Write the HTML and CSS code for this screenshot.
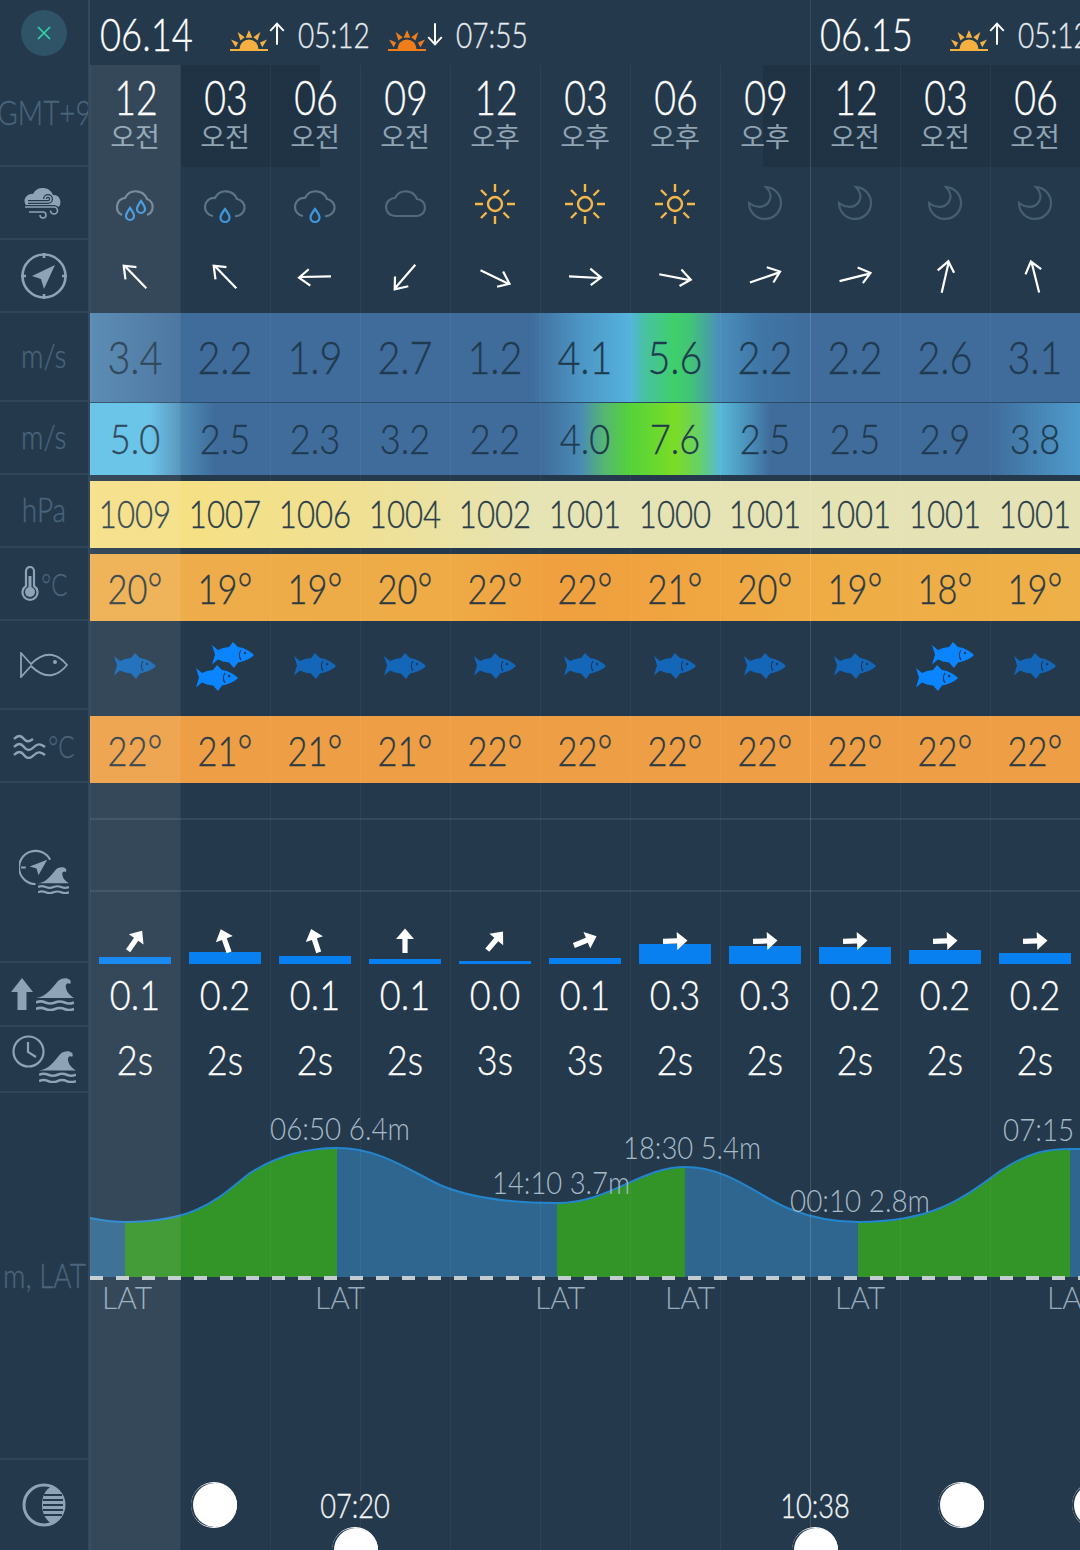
FILE: index.html
```html
<!DOCTYPE html>
<html lang="ko">
<head>
    <meta charset="UTF-8">
    <meta name="viewport" content="width=device-width, initial-scale=1.0">
    <title>Windy forecast</title>
    <link rel="stylesheet" href="styles.css">
</head>
<body>
    <!-- shared icons -->
    <svg class="defs" width="0" height="0">
        <symbol id="sun-half" viewBox="0 0 40 22">
            <path d="M10 20a10 10 0 0 1 20 0z"/>
            <path d="M0 20h40v2H0zM20 0l3.500 8h-7zM8 2l7.500 5.500-4.500 3.500zM32 2l-7.500 5.500 4.500 3.500zM1 10l7.500 3-2.500 5zM39 10l-7.500 3 2.500 5z"/>
        </symbol>
        <symbol id="thin-arrow" viewBox="-10 -13 20 26">
            <path d="M0 12V-11M-7.500 -3.500L0 -11.500L7.500 -3.500" fill="none" stroke="currentColor" stroke-width="2.200"/>
        </symbol>
        <symbol id="cloud" viewBox="0 0 44 44">
            <path d="M12 34H33a8.500 8.500 0 0 0 1-17A12 12 0 0 0 12 16a9 9 0 0 0 0 18z" fill="none" stroke="#52697d" stroke-width="2.200"/>
        </symbol>
        <symbol id="cloud-rain" viewBox="0 0 44 44">
            <path d="M32 34a8.500 8.500 0 0 0 2-17A12 12 0 0 0 12 16a9 9 0 0 0-2 18" fill="none" stroke="#5c7488" stroke-width="2.200"/>
            <path d="M22 27c-3 4-4.500 6-4.500 8.500a4.500 4.500 0 0 0 9 0c0-2.500-1.500-4.500-4.500-8.500z" fill="none" stroke="#3f97dd" stroke-width="2.200"/>
        </symbol>
        <symbol id="cloud-rain2" viewBox="0 0 44 44">
            <path d="M34 33a8.500 8.500 0 0 0 0-16A12 12 0 0 0 12 16a9 9 0 0 0-3 17" fill="none" stroke="#6d8396" stroke-width="2.200"/>
            <path d="M17 26c-2.500 3.500-4 5.500-4 8a4 4 0 0 0 8 0c0-2.500-1.500-4.500-4-8z" fill="none" stroke="#3f97dd" stroke-width="2.200"/>
            <path d="M28 19c-2.500 3.500-4 5.500-4 8a4 4 0 0 0 8 0c0-2.500-1.500-4.500-4-8z" fill="none" stroke="#3f97dd" stroke-width="2.200"/>
        </symbol>
        <symbol id="sun" viewBox="0 0 44 44">
            <circle cx="22" cy="22" r="7" fill="none" stroke="#f3b849" stroke-width="2.400"/>
            <path d="M22 2v8M22 34v8M2 22h8M34 22h8M8 8l5.500 5.500M30.500 30.500L36 36M36 8l-5.500 5.500M13.500 30.500L8 36" stroke="#f3b849" stroke-width="2.400"/>
        </symbol>
        <symbol id="moon" viewBox="0 0 44 44">
            <path d="M23 5A16 16 0 1 1 6 21C11 25 20 27 25 21C29 16 28 10 23 5z" fill="none" stroke="#475f73" stroke-width="2.200"/>
        </symbol>
        <symbol id="wind-arrow" viewBox="-20 -20 40 40">
            <path d="M0 16L.5 -15M-8.500 -5L0 -16L8 -6" fill="none" stroke="#fff" stroke-width="2.200"/>
        </symbol>
        <symbol id="wave-arrow" viewBox="-14 -14 28 28">
            <path d="M-2.600 12V-2H-9L0 -12.500L9 -2H2.600V12z" fill="#fff"/>
        </symbol>
        <symbol id="fish" viewBox="0 0 44 28">
            <path fill="currentColor" d="M1 4l6 5 5-2 6-1 4-5 5 5c7 1 12 4 16 8-4 4-9 6-16 7.500l-4 5.500-5-5.500-6-1-5-2-6 5 3-10z"/>
            <path fill="none" stroke="#1b3c5c" stroke-width="1.200" d="M30 9c-2 3-2 7 0 10"/>
            <circle cx="34" cy="12" r="1.200" fill="#1b3c5c"/>
        </symbol>
        <symbol id="waves" viewBox="0 0 38 33">
            <path d="M0 20C10 19 16 10 22 3C25 0 31-1 34 2C35 3 35 5 34 6C31 4 29 7 30 10C31 15 34 17 38 20z" fill="currentColor"/>
            <path d="M0 24.500c3-1.500 6-1.500 9.500 0s6 1.500 9.500 0 6-1.500 9.500 0 6 1.500 9.500 0M0 31c3-1.500 6-1.500 9.500 0s6 1.500 9.500 0 6-1.500 9.500 0 6 1.500 9.500 0" fill="none" stroke="currentColor" stroke-width="2.600"/>
        </symbol>
    </svg>

    <div class="page">
        <div class="labels">
            <div class="lb lb-top"><div class="close-btn">
                <svg width="14" height="14" viewBox="0 0 14 14"><path d="M1 1l12 12M13 1L1 13" stroke="#2fd8a8" stroke-width="1.600"/></svg>
            </div></div>
            <div class="lb lb-hours"><span class="lb-txt">GMT+9</span></div>
            <div class="lb lb-73">
                <svg class="lb-ico" width="40" height="32" viewBox="0 0 40 32">
                    <path d="M8 21a7 7 0 0 1-1-14 3 3 0 0 1 2 0A11 11 0 0 1 29 8a7 7 0 0 1 4 13z" fill="#8ea3b5"/>
                    <path d="M4 15h20a3 3 0 1 0-3-3M1 20h29a3.500 3.500 0 1 1-3.500 3.500M5 25h14a3 3 0 1 1-3 3" fill="none" stroke="#24394c" stroke-width="4"/>
                    <path d="M4 15h20a3 3 0 1 0-3-3M1 20h29a3.500 3.500 0 1 1-3.500 3.500M5 25h14a3 3 0 1 1-3 3" fill="none" stroke="#8ea3b5" stroke-width="1.600"/>
                </svg>
            </div>
            <div class="lb lb-73">
                <svg class="lb-ico" width="48" height="48" viewBox="0 0 48 48">
                    <circle cx="24" cy="24" r="21.500" fill="none" stroke="#8ea3b5" stroke-width="2.600"/>
                    <path d="M24 1v5M24 42v5M1 24h5M42 24h5" stroke="#8ea3b5" stroke-width="2.600"/>
                    <path d="M35 13L12 24l9 3 3 10z" fill="#8ea3b5"/>
                </svg>
            </div>
            <div class="lb lb-89"><span class="lb-txt">m/s</span></div>
            <div class="lb lb-73"><span class="lb-txt">m/s</span></div>
            <div class="lb lb-73"><span class="lb-txt">hPa</span></div>
            <div class="lb lb-73">
                <svg class="lb-ico" width="18" height="36" viewBox="0 0 18 36">
                    <path d="M5 20V5a4 4 0 0 1 8 0v15a7.500 7.500 0 1 1-8 0z" fill="none" stroke="#8ea3b5" stroke-width="2.200"/>
                    <circle cx="9" cy="26" r="5" fill="#8ea3b5"/>
                    <path d="M9 26V10" stroke="#8ea3b5" stroke-width="3"/>
                </svg>
                <span class="unit">°C</span>
            </div>
            <div class="lb lb-89">
                <svg class="lb-ico" width="48" height="26" viewBox="0 0 48 26">
                    <path d="M1 1l10 11C18 5 26 2 32 3c6 1 11 5 15 10-4 5-9 9-15 10-6 1-14-2-21-9L1 25z" fill="none" stroke="#8ea3b5" stroke-width="1.800"/>
                    <circle cx="35" cy="10" r="2" fill="#8ea3b5"/>
                </svg>
            </div>
            <div class="lb lb-73">
                <svg class="lb-ico" width="33" height="26" viewBox="0 0 33 26">
                    <path d="M1 6c4-4 7-4 10 0s6 2 9 0M1 14c4-4 7-4 10 0s6 4 10 0 7-3 11 0M1 22c4-4 7-4 10 0s6 4 10 0 7-3 11 0" fill="none" stroke="#8ea3b5" stroke-width="2.400"/>
                </svg>
                <span class="unit">°C</span>
            </div>
            <div class="lb lb-180">
                <div class="combo combo-dir">
                    <svg width="37" height="37" viewBox="0 0 38 38" class="combo-main">
                        <path d="M32 11A17 17 0 1 0 17 36M2 19h5" fill="none" stroke="#8ea3b5" stroke-width="2.200"/>
                        <path d="M29 11L11 18l7 2 2 7z" fill="#8ea3b5"/>
                    </svg>
                    <svg width="31" height="27" class="combo-wave"><use href="#waves"/></svg>
                </div>
            </div>
            <div class="lb lb-64">
                <svg width="22" height="32" viewBox="0 0 22 32" class="lb-ico"><path d="M11 0L22 14H15.500V32H6.500V14H0z" fill="#8ea3b5"/></svg>
                <svg width="38" height="33" class="lb-ico"><use href="#waves"/></svg>
            </div>
            <div class="lb lb-66">
                <div class="combo combo-clock">
                    <svg width="33" height="33" viewBox="0 0 33 33" class="combo-main">
                        <circle cx="16.500" cy="16.500" r="15" fill="none" stroke="#8ea3b5" stroke-width="2.200"/>
                        <path d="M16 7v10l8 5" fill="none" stroke="#8ea3b5" stroke-width="2.200"/>
                    </svg>
                    <svg width="37" height="32" class="combo-wave"><use href="#waves"/></svg>
                </div>
            </div>
            <div class="lb lb-tide"><span class="lb-txt">m, LAT</span></div>
            <div class="lb lb-moon">
                <svg class="lb-ico" width="44" height="44" viewBox="0 0 44 44">
                    <circle cx="22" cy="22" r="20" fill="none" stroke="#8ea3b5" stroke-width="3"/>
                    <path d="M30 3c-8 4-10 12-10 19s3 15 10 19c7-3 12-11 12-19S37 6 30 3z" fill="#8ea3b5"/>
                    <path d="M22 12h18M21 17h20M21 22h20M21 27h20M22 32h18" stroke="#24394c" stroke-width="2"/>
                </svg>
            </div>
        </div>

        <div class="table">
            <div class="row row-head">
                <div class="day">
                    <span class="date">06.14</span>
                    <svg class="sun-ico sunrise"><use href="#sun-half"/></svg>
                    <svg class="updown" width="18" height="24"><use href="#thin-arrow"/></svg>
                    <span class="sun-time">05:12</span>
                    <svg class="sun-ico sunset"><use href="#sun-half"/></svg>
                    <svg class="updown down" width="18" height="24"><use href="#thin-arrow"/></svg>
                    <span class="sun-time">07:55</span>
                </div>
                <div class="day">
                    <span class="date">06.15</span>
                    <svg class="sun-ico sunrise"><use href="#sun-half"/></svg>
                    <svg class="updown" width="18" height="24"><use href="#thin-arrow"/></svg>
                    <span class="sun-time">05:12</span>
                </div>
            </div>

            <div class="row row-hours">
                <div class="cell hour"><b>12</b><span>오전</span></div>
                <div class="cell hour"><b>03</b><span>오전</span></div>
                <div class="cell hour"><b>06</b><span>오전</span></div>
                <div class="cell hour"><b>09</b><span>오전</span></div>
                <div class="cell hour"><b>12</b><span>오후</span></div>
                <div class="cell hour"><b>03</b><span>오후</span></div>
                <div class="cell hour"><b>06</b><span>오후</span></div>
                <div class="cell hour"><b>09</b><span>오후</span></div>
                <div class="cell hour"><b>12</b><span>오전</span></div>
                <div class="cell hour"><b>03</b><span>오전</span></div>
                <div class="cell hour"><b>06</b><span>오전</span></div>
            </div>

            <div class="row row-73">
                <div class="cell"><svg class="wx"><use href="#cloud-rain2"/></svg></div>
                <div class="cell"><svg class="wx"><use href="#cloud-rain"/></svg></div>
                <div class="cell"><svg class="wx"><use href="#cloud-rain"/></svg></div>
                <div class="cell"><svg class="wx"><use href="#cloud"/></svg></div>
                <div class="cell"><svg class="wx"><use href="#sun"/></svg></div>
                <div class="cell"><svg class="wx"><use href="#sun"/></svg></div>
                <div class="cell"><svg class="wx"><use href="#sun"/></svg></div>
                <div class="cell"><svg class="wx"><use href="#moon"/></svg></div>
                <div class="cell"><svg class="wx"><use href="#moon"/></svg></div>
                <div class="cell"><svg class="wx"><use href="#moon"/></svg></div>
                <div class="cell"><svg class="wx"><use href="#moon"/></svg></div>
            </div>

            <div class="row row-73">
                <div class="cell"><svg class="wind" style="transform: rotate(-45deg)"><use href="#wind-arrow"/></svg></div>
                <div class="cell"><svg class="wind" style="transform: rotate(-45deg)"><use href="#wind-arrow"/></svg></div>
                <div class="cell"><svg class="wind" style="transform: rotate(-92deg)"><use href="#wind-arrow"/></svg></div>
                <div class="cell"><svg class="wind" style="transform: rotate(-140deg)"><use href="#wind-arrow"/></svg></div>
                <div class="cell"><svg class="wind" style="transform: rotate(115deg)"><use href="#wind-arrow"/></svg></div>
                <div class="cell"><svg class="wind" style="transform: rotate(92deg)"><use href="#wind-arrow"/></svg></div>
                <div class="cell"><svg class="wind" style="transform: rotate(100deg)"><use href="#wind-arrow"/></svg></div>
                <div class="cell"><svg class="wind" style="transform: rotate(70deg)"><use href="#wind-arrow"/></svg></div>
                <div class="cell"><svg class="wind" style="transform: rotate(75deg)"><use href="#wind-arrow"/></svg></div>
                <div class="cell"><svg class="wind" style="transform: rotate(12deg)"><use href="#wind-arrow"/></svg></div>
                <div class="cell"><svg class="wind" style="transform: rotate(-15deg)"><use href="#wind-arrow"/></svg></div>
            </div>

            <div class="row row-gust">
                <div class="cell">3.4</div><div class="cell">2.2</div><div class="cell">1.9</div><div class="cell">2.7</div>
                <div class="cell">1.2</div><div class="cell">4.1</div><div class="cell">5.6</div><div class="cell">2.2</div>
                <div class="cell">2.2</div><div class="cell">2.6</div><div class="cell">3.1</div>
            </div>

            <div class="row row-wind">
                <div class="cell">5.0</div><div class="cell">2.5</div><div class="cell">2.3</div><div class="cell">3.2</div>
                <div class="cell">2.2</div><div class="cell">4.0</div><div class="cell">7.6</div><div class="cell">2.5</div>
                <div class="cell">2.5</div><div class="cell">2.9</div><div class="cell">3.8</div>
            </div>

            <div class="row row-band">
                <div class="band band-hpa">
                    <div class="cell">1009</div><div class="cell">1007</div><div class="cell">1006</div><div class="cell">1004</div>
                    <div class="cell">1002</div><div class="cell">1001</div><div class="cell">1000</div><div class="cell">1001</div>
                    <div class="cell">1001</div><div class="cell">1001</div><div class="cell">1001</div>
                </div>
            </div>

            <div class="row row-band">
                <div class="band band-temp">
                    <div class="cell">20<i>°</i></div><div class="cell">19<i>°</i></div><div class="cell">19<i>°</i></div><div class="cell">20<i>°</i></div>
                    <div class="cell">22<i>°</i></div><div class="cell">22<i>°</i></div><div class="cell">21<i>°</i></div><div class="cell">20<i>°</i></div>
                    <div class="cell">19<i>°</i></div><div class="cell">18<i>°</i></div><div class="cell">19<i>°</i></div>
                </div>
            </div>

            <div class="row row-fish">
                <div class="cell"><svg class="fish dim"><use href="#fish"/></svg></div>
                <div class="cell fish-two"><svg class="fish top"><use href="#fish"/></svg><svg class="fish low"><use href="#fish"/></svg></div>
                <div class="cell"><svg class="fish dim"><use href="#fish"/></svg></div>
                <div class="cell"><svg class="fish dim"><use href="#fish"/></svg></div>
                <div class="cell"><svg class="fish dim"><use href="#fish"/></svg></div>
                <div class="cell"><svg class="fish dim"><use href="#fish"/></svg></div>
                <div class="cell"><svg class="fish dim"><use href="#fish"/></svg></div>
                <div class="cell"><svg class="fish dim"><use href="#fish"/></svg></div>
                <div class="cell"><svg class="fish dim"><use href="#fish"/></svg></div>
                <div class="cell fish-two"><svg class="fish top"><use href="#fish"/></svg><svg class="fish low"><use href="#fish"/></svg></div>
                <div class="cell"><svg class="fish dim"><use href="#fish"/></svg></div>
            </div>

            <div class="row row-water">
                <div class="cell">22<i>°</i></div><div class="cell">21<i>°</i></div><div class="cell">21<i>°</i></div><div class="cell">21<i>°</i></div>
                <div class="cell">22<i>°</i></div><div class="cell">22<i>°</i></div><div class="cell">22<i>°</i></div><div class="cell">22<i>°</i></div>
                <div class="cell">22<i>°</i></div><div class="cell">22<i>°</i></div><div class="cell">22<i>°</i></div>
            </div>

            <div class="row row-blank1"></div>
            <div class="row row-blank2"></div>

            <div class="row row-bars">
                <div class="cell"><div class="bar" style="height: 7px"></div><svg class="wave-dir" style="transform: rotate(35deg)"><use href="#wave-arrow"/></svg></div>
                <div class="cell"><div class="bar" style="height: 12px"></div><svg class="wave-dir" style="transform: rotate(-20deg)"><use href="#wave-arrow"/></svg></div>
                <div class="cell"><div class="bar" style="height: 8px"></div><svg class="wave-dir" style="transform: rotate(-18deg)"><use href="#wave-arrow"/></svg></div>
                <div class="cell"><div class="bar" style="height: 5px"></div><svg class="wave-dir"><use href="#wave-arrow"/></svg></div>
                <div class="cell"><div class="bar" style="height: 3px"></div><svg class="wave-dir" style="transform: rotate(40deg)"><use href="#wave-arrow"/></svg></div>
                <div class="cell"><div class="bar" style="height: 6px"></div><svg class="wave-dir" style="transform: rotate(68deg)"><use href="#wave-arrow"/></svg></div>
                <div class="cell"><div class="bar" style="height: 20px"></div><svg class="wave-dir" style="transform: rotate(88deg)"><use href="#wave-arrow"/></svg></div>
                <div class="cell"><div class="bar" style="height: 18px"></div><svg class="wave-dir" style="transform: rotate(88deg)"><use href="#wave-arrow"/></svg></div>
                <div class="cell"><div class="bar" style="height: 17px"></div><svg class="wave-dir" style="transform: rotate(88deg)"><use href="#wave-arrow"/></svg></div>
                <div class="cell"><div class="bar" style="height: 14px"></div><svg class="wave-dir" style="transform: rotate(88deg)"><use href="#wave-arrow"/></svg></div>
                <div class="cell"><div class="bar" style="height: 11px"></div><svg class="wave-dir" style="transform: rotate(88deg)"><use href="#wave-arrow"/></svg></div>
            </div>

            <div class="row row-height">
                <div class="cell">0.1</div><div class="cell">0.2</div><div class="cell">0.1</div><div class="cell">0.1</div>
                <div class="cell">0.0</div><div class="cell">0.1</div><div class="cell">0.3</div><div class="cell">0.3</div>
                <div class="cell">0.2</div><div class="cell">0.2</div><div class="cell">0.2</div>
            </div>

            <div class="row row-period">
                <div class="cell">2s</div><div class="cell">2s</div><div class="cell">2s</div><div class="cell">2s</div>
                <div class="cell">3s</div><div class="cell">3s</div><div class="cell">2s</div><div class="cell">2s</div>
                <div class="cell">2s</div><div class="cell">2s</div><div class="cell">2s</div>
            </div>

            <div class="row row-tide">
                <svg class="tide" width="990" height="367" viewBox="90 1093 990 367">
                    <defs>
                        <clipPath id="under-curve">
                            <path d="M90 1217C105 1220 115 1221 125 1221C200 1221 220 1195 250 1172C280 1153 310 1147 337 1147C380 1147 410 1170 440 1184C475 1199 520 1202 557 1202C610 1202 640 1166 685 1166C730 1166 760 1197 790 1208C815 1218 835 1221 858 1221C930 1221 960 1200 1000 1170C1030 1150 1050 1148 1070 1148L1080 1148V1276H90z"/>
                        </clipPath>
                    </defs>
                    <g clip-path="url(#under-curve)">
                        <rect x="90" y="1140" width="990" height="136" fill="#2f668f"/>
                        <rect x="125" y="1140" width="212" height="136" fill="#339428"/>
                        <rect x="557" y="1140" width="128" height="136" fill="#339428"/>
                        <rect x="858" y="1140" width="212" height="136" fill="#339428"/>
                    </g>
                    <path d="M90 1217C105 1220 115 1221 125 1221C200 1221 220 1195 250 1172C280 1153 310 1147 337 1147C380 1147 410 1170 440 1184C475 1199 520 1202 557 1202C610 1202 640 1166 685 1166C730 1166 760 1197 790 1208C815 1218 835 1221 858 1221C930 1221 960 1200 1000 1170C1030 1150 1050 1148 1070 1148L1080 1148" fill="none" stroke="#2385cc" stroke-width="2"/>
                    <path d="M90 1277H1080" stroke="#c3ccd0" stroke-width="4" stroke-dasharray="13 13"/>
                    <g class="tide-time">
                        <text x="270" y="1139" textLength="140" lengthAdjust="spacingAndGlyphs">06:50 6.4m</text>
                        <text x="492" y="1193" textLength="138" lengthAdjust="spacingAndGlyphs">14:10 3.7m</text>
                        <text x="623" y="1158" textLength="138" lengthAdjust="spacingAndGlyphs">18:30 5.4m</text>
                        <text x="790" y="1211" textLength="140" lengthAdjust="spacingAndGlyphs">00:10 2.8m</text>
                        <text x="1003" y="1140" textLength="140" lengthAdjust="spacingAndGlyphs">07:15 6.4m</text>
                    </g>
                    <g class="tide-lat">
                        <text x="102" y="1308" textLength="50" lengthAdjust="spacingAndGlyphs">LAT</text>
                        <text x="315" y="1308" textLength="50" lengthAdjust="spacingAndGlyphs">LAT</text>
                        <text x="535" y="1308" textLength="50" lengthAdjust="spacingAndGlyphs">LAT</text>
                        <text x="665" y="1308" textLength="50" lengthAdjust="spacingAndGlyphs">LAT</text>
                        <text x="835" y="1308" textLength="50" lengthAdjust="spacingAndGlyphs">LAT</text>
                        <text x="1047" y="1308" textLength="50" lengthAdjust="spacingAndGlyphs">LAT</text>
                    </g>
                </svg>
            </div>

            <div class="row row-moon">
                <svg class="moon-disc moon-a" viewBox="0 0 46 46"><circle cx="23" cy="23" r="23" fill="#fff"/><circle cx="22" cy="23" r="22" fill="#24394c"/><circle cx="24" cy="23" r="22" fill="#fff"/></svg>
                <div class="rise rise-a">07:20</div>
                <svg class="moon-disc rise-disc-a" viewBox="0 0 46 46"><circle cx="23" cy="23" r="23" fill="#fff"/><circle cx="22" cy="23" r="22" fill="#24394c"/><circle cx="24" cy="23" r="22" fill="#fff"/></svg>
                <div class="rise rise-b">10:38</div>
                <svg class="moon-disc rise-disc-b" viewBox="0 0 46 46"><circle cx="23" cy="23" r="23" fill="#fff"/><circle cx="22" cy="23" r="22" fill="#24394c"/><circle cx="24" cy="23" r="22" fill="#fff"/></svg>
                <svg class="moon-disc moon-b" viewBox="0 0 46 46"><circle cx="23" cy="23" r="23" fill="#fff"/><circle cx="22" cy="23" r="22" fill="#24394c"/><circle cx="24" cy="23" r="22" fill="#fff"/></svg>
                <svg class="moon-disc moon-c" viewBox="0 0 46 46"><circle cx="23" cy="23" r="23" fill="#fff"/><circle cx="22" cy="23" r="22" fill="#24394c"/><circle cx="24" cy="23" r="22" fill="#fff"/></svg>
            </div>

            <!-- overlays on top of the rows -->
            <div class="gridlines"></div>
            <div class="day-line"></div>
            <div class="now-col"></div>
        </div>
    </div>
</body>
</html>
```

FILE: styles.css
```css
body {
    margin: 0;
    background: #24394c;
    font-family: 'Lato', 'Noto Sans CJK KR', sans-serif;
    font-weight: 300;
    -webkit-text-stroke: .35px;
    color: #fff;
    overflow: hidden;
}
.defs {
    position: absolute;
}
.page {
    display: flex;
    width: 1080px;
    height: 1550px;
    overflow: hidden;
}

/* left column */
.labels {
    width: 90px;
    flex: none;
    box-sizing: border-box;
    border-right: 2px solid #34495b;
}
.lb {
    display: flex;
    align-items: center;
    justify-content: center;
    gap: 4px;
    box-sizing: border-box;
    border-bottom: 2px solid #2f4558;
    color: #4a657c;
    font-size: 34px;
    white-space: nowrap;
    overflow: hidden;
}
.lb-txt {
    display: block;
    transform: scaleX(.82);
    margin-top: -4px;
}
.lb-ico {
    flex: none;
    color: #8ea3b5;
}
.lb-top {
    height: 65px;
    border-bottom: none;
}
.close-btn {
    width: 46px;
    height: 46px;
    border-radius: 50%;
    background: #2f5468;
    display: flex;
    align-items: center;
    justify-content: center;
}
.lb-hours {
    height: 102px;
    padding-bottom: 4px;
}
.lb-73 {
    height: 73px;
}
.lb-89 {
    height: 89px;
}
.lb-180 {
    height: 180px;
    padding-bottom: 2px;
}
.lb-64 {
    height: 64px;
    gap: 3px;
    padding-right: 4px;
}
.lb-66 {
    height: 66px;
}
.lb-tide {
    height: 367px;
    padding-top: 1px;
}
.lb-moon {
    height: 90px;
    border-bottom: none;
}
.unit {
    font-size: 32px;
    margin: 0 -4px 0 -6px;
    transform: scaleX(.75);
}
.combo {
    position: relative;
    color: #8ea3b5;
}
.combo-dir {
    width: 50px;
    height: 45px;
}
.combo-clock {
    width: 64px;
    height: 48px;
}
.combo-main {
    position: absolute;
    left: 0;
    top: 0;
}
.combo-wave {
    position: absolute;
    right: 0;
    bottom: 0;
}

/* forecast table */
.table {
    position: relative;
    width: 990px;
    flex: none;
    overflow: hidden;
}
.row {
    display: flex;
    box-sizing: border-box;
}
.cell {
    width: 90px;
    flex: none;
    position: relative;
    display: flex;
    align-items: center;
    justify-content: center;
    white-space: nowrap;
}
.row-gust .cell,
.row-wind .cell,
.row-height .cell,
.row-period .cell {
    transform: scaleX(.86);
}
.band .cell,
.row-water .cell {
    transform: scaleX(.82);
}
.cell i {
    font-style: normal;
    font-size: 44px;
}

.row-head {
    height: 65px;
}
.day {
    width: 720px;
    flex: none;
    box-sizing: border-box;
    padding: 2px 0 0 10px;
    display: flex;
    align-items: center;
    white-space: nowrap;
}
.date {
    width: 130px;
    flex: none;
    font-size: 46px;
    transform: scaleX(.79);
    transform-origin: left center;
}
.sun-ico {
    width: 38px;
    height: 21px;
    flex: none;
    margin-top: 14px;
}
.sunrise {
    fill: #f5b042;
}
.sunset {
    fill: #f07d1a;
    margin-left: 18px;
}
.updown {
    flex: none;
    margin-right: 12px;
}
.down {
    transform: rotate(180deg);
}
.sun-time {
    width: 72px;
    flex: none;
    font-size: 35px;
    color: #e6ecf0;
    transform: scaleX(.8);
    transform-origin: left center;
}

.row-hours {
    height: 102px;
    background: linear-gradient(to right, transparent 91px, rgba(10, 25, 35, .2) 91px, rgba(10, 25, 35, .2) 230px, transparent 230px, transparent 673px, rgba(10, 25, 35, .2) 673px);
}
.hour {
    flex-direction: column;
    justify-content: flex-start;
    padding-top: 7px;
    box-sizing: border-box;
}
.hour b {
    font-weight: 300;
    font-size: 47px;
    line-height: 50px;
    height: 47px;
    padding-left: 2px;
    transform: scaleX(.8);
}
.hour span {
    font-family: 'Noto Sans CJK KR', sans-serif;
    font-weight: 400;
    font-size: 27px;
    line-height: 34px;
    color: #8fa3b3;
    -webkit-text-stroke: 0;
}

.row-73 {
    height: 73px;
}
.wx {
    width: 44px;
    height: 44px;
}
.wind {
    width: 40px;
    height: 40px;
}

.row-gust {
    height: 90px;
    padding-bottom: 3px;
    font-size: 46px;
    color: #1f3a4e;
    border-bottom: 1px solid #2a4a66;
    background: linear-gradient(to right, #4f84ae 0, #3f6c9b 90px, #3f6c9b 270px, #3f6c9b 440px, #4c95c4 490px, #55b3de 540px, #48c2a0 555px, #3ed06a 585px, #42c478 600px, #4a8ebc 630px, #3f76a6 670px, #3f6c9b 720px, #3f6c9b 990px);
}
.row-wind {
    height: 72px;
    padding-bottom: 3px;
    font-size: 42px;
    color: #1f3a4e;
    background: linear-gradient(to right, #5fc0e8 0, #5fc0e8 60px, #4f8fb8 90px, #3f6c9b 125px, #3f6c9b 450px, #4a8ab5 490px, #55b870 515px, #55d23a 540px, #7bdc26 585px, #66d06a 610px, #57b8d8 630px, #4a8eb8 660px, #3f6c9b 680px, #3f6c9b 900px, #4e9bcc 990px);
}
.row-band {
    height: 73px;
    padding-top: 6px;
}
.band {
    display: flex;
    width: 990px;
    height: 67px;
}
.band-hpa {
    font-size: 38px;
    padding-bottom: 3px;
    box-sizing: border-box;
    color: #2a3d48;
    background: linear-gradient(to right, #f5df85 0, #f6e084 90px, #efe093 270px, #e6e4b5 450px, #e5e3b5 990px);
}
.band-temp {
    font-size: 42px;
    color: #2b3a42;
    background: linear-gradient(to right, #eeae4c 0, #eeab46 360px, #f0a03f 460px, #f0a23f 540px, #efac45 720px, #eeb048 990px);
}

.row-fish {
    height: 95px;
    padding-bottom: 5px;
}
.fish {
    width: 44px;
    height: 28px;
    flex: none;
    color: #0a84ff;
}
.fish.dim {
    color: #1366b8;
}
.fish-two {
    flex-direction: column;
}
.fish.top {
    margin: 0 0 -5px 16px;
}
.fish.low {
    margin-right: 16px;
}

.row-water {
    height: 67px;
    font-size: 42px;
    color: #2b3a42;
    background: #ee9f45;
}
.row-blank1 {
    height: 37px;
    border-bottom: 2px solid #34495b;
}
.row-blank2 {
    height: 72px;
    border-bottom: 2px solid #34495b;
}
.row-bars {
    height: 72px;
}
.row-bars .cell {
    align-items: flex-end;
}
.bar {
    width: 72px;
    background: #0880f0;
}
.wave-dir {
    position: absolute;
    left: 31px;
    top: 35px;
    width: 28px;
    height: 28px;
}
.row-height {
    height: 64px;
    padding-bottom: 4px;
    font-size: 42px;
}
.row-period {
    height: 66px;
    font-size: 42px;
    padding-bottom: 4px;
}
.row-tide {
    height: 367px;
}
.tide {
    display: block;
}
.tide-time text {
    font-size: 31px;
    fill: #a9bbc9;
}
.tide-lat text {
    font-size: 32px;
    fill: #97abbb;
}

.row-moon {
    height: 90px;
    position: relative;
}
.moon-disc {
    position: absolute;
    width: 46px;
    height: 46px;
}
.moon-a {
    left: 101px;
    top: 21px;
}
.moon-b {
    left: 848px;
    top: 21px;
}
.moon-c {
    left: 982px;
    top: 21px;
}
.rise-disc-a {
    left: 242px;
    top: 66px;
}
.rise-disc-b {
    left: 702px;
    top: 66px;
}
.rise {
    position: absolute;
    top: 23px;
    font-size: 34px;
    width: 90px;
    text-align: center;
    color: #f2f5f7;
    transform: scaleX(.8);
}
.rise-a {
    left: 220px;
}
.rise-b {
    left: 680px;
}

/* overlays */
.gridlines {
    position: absolute;
    left: 0;
    right: 0;
    top: 65px;
    bottom: 0;
    background: linear-gradient(to right, rgba(255, 255, 255, .045) 1px, transparent 1px);
    background-size: 90px 100%;
}
.day-line {
    position: absolute;
    left: 720px;
    top: 0;
    bottom: 0;
    width: 1px;
    background: rgba(255, 255, 255, .1);
}
.now-col {
    position: absolute;
    left: 0;
    width: 90px;
    top: 65px;
    bottom: 0;
    background: rgba(255, 255, 255, .08);
}
```
